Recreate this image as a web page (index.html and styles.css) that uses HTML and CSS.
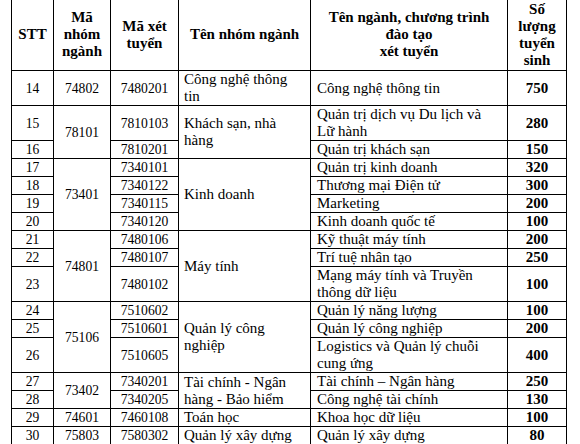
FILE: index.html
```html
<!DOCTYPE html>
<html lang="vi">
<head>
<meta charset="utf-8">
<title>Chỉ tiêu tuyển sinh</title>
<link rel="stylesheet" href="styles.css">
</head>
<body>
<div class="page">
<table class="quota">
  <colgroup>
    <col class="c-stt"><col class="c-group"><col class="c-code"><col class="c-gname"><col class="c-name"><col class="c-qty">
  </colgroup>
  <thead>
    <tr>
      <th>STT</th>
      <th>Mã<br>nhóm<br>ngành</th>
      <th>Mã xét<br>tuyển</th>
      <th>Tên nhóm ngành</th>
      <th>Tên ngành, chương trình<br>đào tạo<br>xét tuyển</th>
      <th>Số<br>lượng<br>tuyển<br>sinh</th>
    </tr>
  </thead>
  <tbody>
    <tr><td class="num">14</td><td class="num">74802</td><td class="num">7480201</td><td class="grp">Công nghệ thông tin</td><td class="txt">Công nghệ thông tin</td><td class="qty">750</td></tr>
    <tr><td class="num">15</td><td class="num" rowspan="2">78101</td><td class="num">7810103</td><td class="grp" rowspan="2">Khách sạn, nhà hàng</td><td class="txt">Quản trị dịch vụ Du lịch và Lữ hành</td><td class="qty">280</td></tr>
    <tr><td class="num">16</td><td class="num">7810201</td><td class="txt">Quản trị khách sạn</td><td class="qty">150</td></tr>
    <tr><td class="num">17</td><td class="num" rowspan="4">73401</td><td class="num">7340101</td><td class="grp" rowspan="4">Kinh doanh</td><td class="txt">Quản trị kinh doanh</td><td class="qty">320</td></tr>
    <tr><td class="num">18</td><td class="num">7340122</td><td class="txt">Thương mại Điện tử</td><td class="qty">300</td></tr>
    <tr><td class="num">19</td><td class="num">7340115</td><td class="txt">Marketing</td><td class="qty">200</td></tr>
    <tr><td class="num">20</td><td class="num">7340120</td><td class="txt">Kinh doanh quốc tế</td><td class="qty">100</td></tr>
    <tr><td class="num">21</td><td class="num" rowspan="3">74801</td><td class="num">7480106</td><td class="grp" rowspan="3">Máy tính</td><td class="txt">Kỹ thuật máy tính</td><td class="qty">200</td></tr>
    <tr><td class="num">22</td><td class="num">7480107</td><td class="txt">Trí tuệ nhân tạo</td><td class="qty">250</td></tr>
    <tr><td class="num">23</td><td class="num">7480102</td><td class="txt">Mạng máy tính và Truyền thông dữ liệu</td><td class="qty">100</td></tr>
    <tr><td class="num">24</td><td class="num" rowspan="3">75106</td><td class="num">7510602</td><td class="grp" rowspan="3">Quản lý công nghiệp</td><td class="txt">Quản lý năng lượng</td><td class="qty">100</td></tr>
    <tr><td class="num">25</td><td class="num">7510601</td><td class="txt">Quản lý công nghiệp</td><td class="qty">200</td></tr>
    <tr><td class="num">26</td><td class="num">7510605</td><td class="txt">Logistics và Quản lý chuỗi cung ứng</td><td class="qty">400</td></tr>
    <tr><td class="num">27</td><td class="num" rowspan="2">73402</td><td class="num">7340201</td><td class="grp" rowspan="2">Tài chính - Ngân hàng - Bảo hiểm</td><td class="txt">Tài chính – Ngân hàng</td><td class="qty">250</td></tr>
    <tr><td class="num">28</td><td class="num">7340205</td><td class="txt">Công nghệ tài chính</td><td class="qty">130</td></tr>
    <tr><td class="num">29</td><td class="num">74601</td><td class="num">7460108</td><td class="grp">Toán học</td><td class="txt">Khoa học dữ liệu</td><td class="qty">100</td></tr>
    <tr><td class="num">30</td><td class="num">75803</td><td class="num">7580302</td><td class="grp">Quản lý xây dựng</td><td class="txt">Quản lý xây dựng</td><td class="qty">80</td></tr>
  </tbody>
</table>
</div>
</body>
</html>
```
FILE: styles.css
```css
html, body {
  margin: 0;
  padding: 0;
  background: #ffffff;
}
.page {
  padding-left: 11px;
  font-family: "Liberation Serif", "Times New Roman", serif;
  color: #000;
}
.quota {
  border-collapse: collapse;
  table-layout: fixed;
  width: 556px;
  margin-top: -2px;
  font-size: 15px;
  line-height: 17px;
}
.c-stt { width: 42px; }
.c-group { width: 57px; }
.c-code { width: 68px; }
.c-gname { width: 132px; }
.c-name { width: 197px; }
.c-qty { width: 59px; }
.quota th,
.quota td {
  border: 1px solid #000;
  padding: 0 5px;
  vertical-align: middle;
}
.quota th {
  font-weight: bold;
  text-align: center;
  height: 71px;
  padding: 0 2px;
}
.num {
  text-align: center;
  font-size: 13.6px;
}
.quota td.grp {
  text-align: left;
  padding: 0 6px 0 5px;
}
.quota td.txt {
  text-align: left;
  padding: 0 9px 0 6px;
}
.qty {
  text-align: center;
  font-weight: bold;
}
```
